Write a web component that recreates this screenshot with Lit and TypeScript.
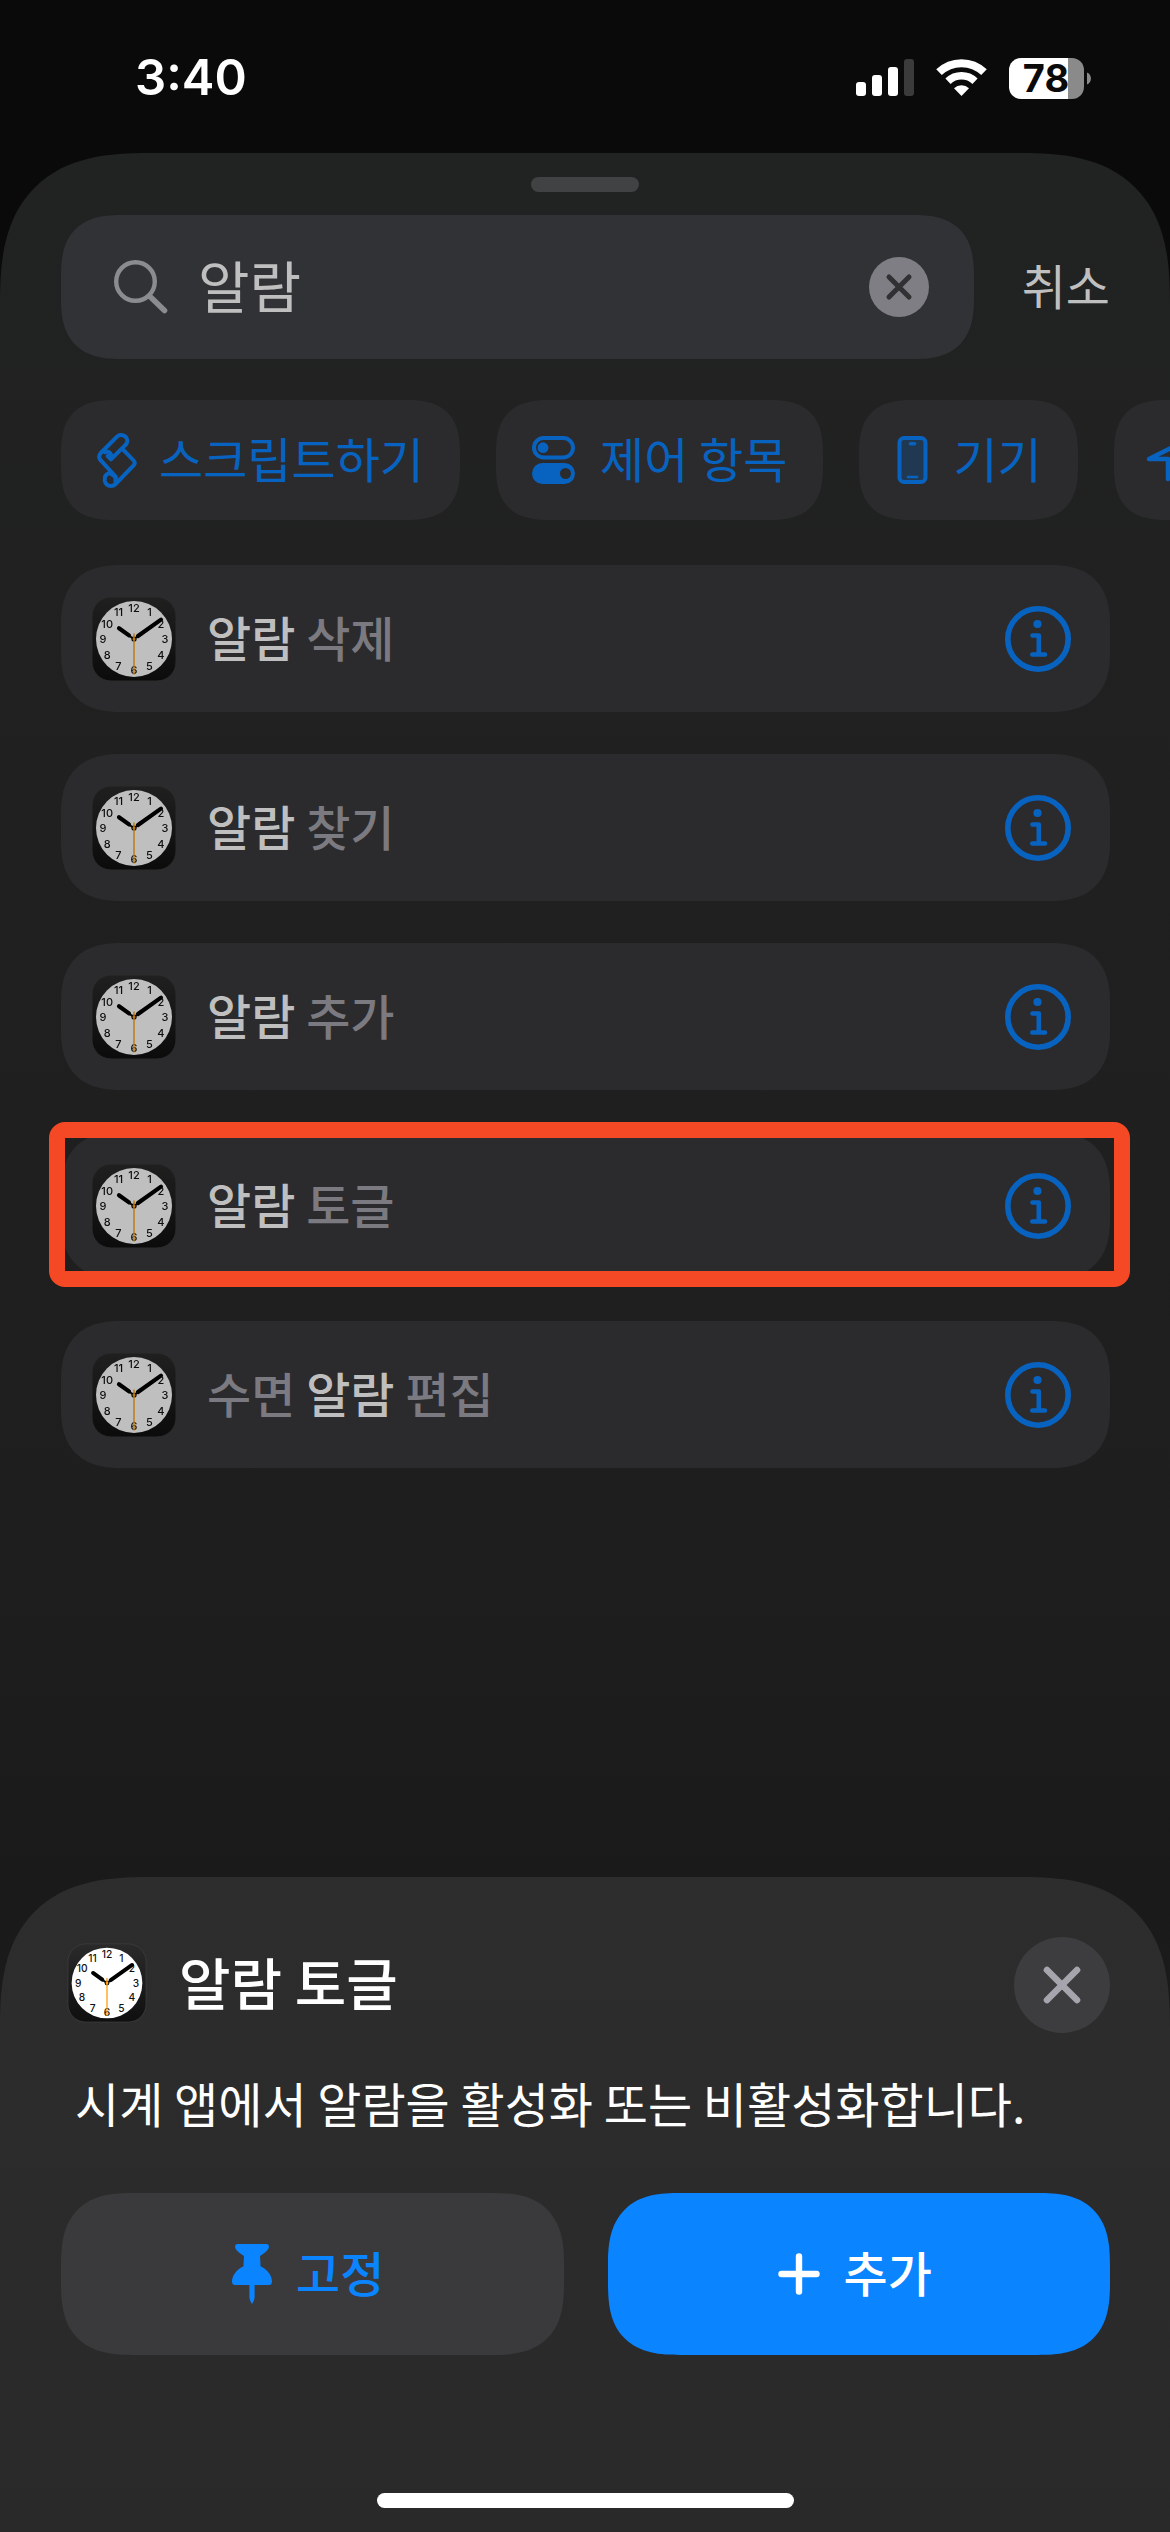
import { LitElement, html, svg, css } from "lit";
import { customElement, property, state } from "lit/decorators.js";

const HOURS = [12, 1, 2, 3, 4, 5, 6, 7, 8, 9, 10, 11];

@customElement("clock-icon")
class ClockIcon extends LitElement {
  static styles = css`
    :host {
      display: block;
      flex: none;
    }
    .clock {
      display: block;
      width: 100%;
      height: 100%;
    }
    .numeral {
      font-family: Inter, "Liberation Sans", sans-serif;
      font-size: 11px;
      font-weight: 500;
      text-anchor: middle;
      fill: #111;
    }
  `;

  render() {
    return html`
      <svg class="clock" viewBox="0 0 86 86" aria-hidden="true">
        <defs>
          <linearGradient id="case" x1="0" y1="0" x2="0" y2="1">
            <stop offset="0" stop-color="#2a2a2b" />
            <stop offset="1" stop-color="#0f0f10" />
          </linearGradient>
        </defs>
        <rect x="1" y="1" width="84" height="84" rx="19" fill="url(#case)" stroke="#3a3a3b" stroke-width="1" />
        <circle cx="43" cy="43" r="38" fill="#fff" />
        ${HOURS.map((hour) => {
          const angle = (hour * Math.PI) / 6;
          const x = 43 + Math.sin(angle) * 31;
          const y = 47 - Math.cos(angle) * 31;
          return svg`<text class="numeral" x=${x.toFixed(1)} y=${y.toFixed(1)}>${hour}</text>`;
        })}
        <g stroke="#000" stroke-linecap="round">
          <path d="M43 43 37 39M43 43 49 38.700" stroke-width="2" />
          <path d="M28 32.200 38 39.400M47 40 70 23.600" stroke-width="4.200" />
        </g>
        <circle cx="43" cy="43" r="2.600" fill="#000" />
        <path d="M43 37.500V78.500" stroke="#ff9f0a" stroke-width="1.400" />
        <circle cx="43" cy="43" r="1.500" fill="#ff9f0a" />
      </svg>
    `;
  }
}

const scriptIcon = svg`
  <svg width="42" height="56" viewBox="0 0 42 56" fill="none" stroke="currentColor" stroke-width="4" stroke-linecap="round" stroke-linejoin="round" aria-hidden="true">
    <path d="M28.700 12.700 14 27.300C15.600 22.500 12.600 18.300 8 20.200M14 27.300 10.600 24" />
    <path d="M3.600 28.200C1.800 26 1.800 23.200 3.800 21L20 4.600C22.500 2.200 26.500 2.600 28.800 5 30.800 7.300 30.800 10.500 28.700 12.700" />
    <path d="M3.600 28.200 19 45M12 41.200C8.600 42.400 7.400 45.600 7.800 48.600 8.400 52 11 54 14 54 15.800 54 17.400 53.200 18.600 52L36.600 33.300C38.200 31.500 38.200 30.200 36.600 28.500L25.400 16.800" />
    <path d="M13 41.500C17.500 43 19.500 46 18.400 49.500" />
  </svg>`;

const togglesIcon = svg`
  <svg width="48" height="48" viewBox="0 0 48 48" aria-hidden="true">
    <rect x="2" y="2" width="39" height="19.500" rx="9.750" fill="none" stroke="currentColor" stroke-width="4" />
    <circle cx="11" cy="11.700" r="5.400" fill="currentColor" />
    <path fill="currentColor" fill-rule="evenodd" d="M10.500 27H32.500A10.500 10.500 0 0 1 32.500 48H10.500A10.500 10.500 0 0 1 10.500 27ZM33.500 32A5.500 5.500 0 1 0 33.500 43 5.500 5.500 0 1 0 33.500 32Z" />
  </svg>`;

const phoneIcon = svg`
  <svg width="38" height="48" viewBox="0 0 38 48" aria-hidden="true">
    <rect x="4.500" y="2" width="26" height="44" rx="4.500" fill="#213852" stroke="currentColor" stroke-width="4" />
    <path d="M15.500 7.700H19.500" stroke="currentColor" stroke-width="3.600" stroke-linecap="round" />
    <path d="M13 41H22" stroke="currentColor" stroke-width="2.600" stroke-linecap="round" />
  </svg>`;

const arrowIcon = svg`
  <svg class="spill" width="48" height="48" viewBox="0 0 48 48" fill="none" stroke="currentColor" stroke-width="4.500" stroke-linejoin="round" aria-hidden="true">
    <path d="M-1 23 40 2.500 18 43V23Z" />
  </svg>`;

interface Action {
  parts: { text: string; match?: boolean }[];
  marked?: boolean;
}

const ACTIONS: Action[] = [
  { parts: [{ text: "알람", match: true }, { text: " 삭제" }] },
  { parts: [{ text: "알람", match: true }, { text: " 찾기" }] },
  { parts: [{ text: "알람", match: true }, { text: " 추가" }] },
  { parts: [{ text: "알람", match: true }, { text: " 토글" }], marked: true },
  { parts: [{ text: "수면 " }, { text: "알람", match: true }, { text: " 편집" }] },
];

@customElement("action-row")
class ActionRow extends LitElement {
  static styles = css`
    :host {
      display: block;
    }
    .row {
      position: relative;
      display: flex;
      align-items: center;
      min-height: 147px;
      box-sizing: border-box;
      padding: 0 39px 0 30px;
      border-radius: 48px;
      background: #2b2b2d;
    }
    @supports (corner-shape: squircle) {
      .row {
        border-radius: 60px;
        corner-shape: superellipse(1.3);
      }
    }
    .icon {
      width: 86px;
      height: 86px;
      filter: brightness(0.75);
    }
    .name {
      flex: 1;
      margin-left: 30px;
      padding-bottom: 6px;
      font-size: 48px;
      line-height: 72px;
      font-weight: 500;
      color: #7b7a80;
      white-space: pre;
    }
    .match {
      color: #bfbfbf;
    }
    .info {
      display: block;
      padding: 0;
      border: 0;
      background: none;
      color: #0863c0;
    }
    .glyph {
      display: block;
    }
    .marker {
      position: absolute;
      inset: -10px -20px -8px -12px;
      border: 16px solid #f54824;
      border-radius: 16px;
      pointer-events: none;
    }
  `;

  @property({ attribute: false }) action!: Action;

  render() {
    const label = this.action.parts.map((p) => p.text).join("");
    return html`
      <div class="row">
        <clock-icon class="icon"></clock-icon>
        <span class="name"
          >${this.action.parts.map((p) =>
            p.match ? html`<span class="match">${p.text}</span>` : p.text
          )}</span
        >
        <button class="info" type="button" aria-label="${label} 정보">
          <svg class="glyph" width="66" height="66" viewBox="0 0 66 66" fill="none" stroke="currentColor" aria-hidden="true">
            <circle cx="33" cy="33" r="30.200" stroke-width="5.600" />
            <circle cx="32.500" cy="18" r="4.100" fill="currentColor" stroke="none" />
            <path d="M27.500 29.500H33.800V48.500M27.300 48.500H40" stroke-width="4.600" stroke-linecap="round" stroke-linejoin="round" />
          </svg>
        </button>
        ${this.action.marked ? html`<span class="marker"></span>` : null}
      </div>
    `;
  }
}

@customElement("app-root")
class AppRoot extends LitElement {
  static styles = css`
    :host {
      display: flex;
      flex-direction: column;
      min-height: 100vh;
      background: #0a0a0a;
      color: #fff;
      font-family: "Noto Sans CJK KR", "Noto Sans", sans-serif;
    }
    button,
    input {
      font: inherit;
      color: inherit;
      margin: 0;
      padding: 0;
      border: 0;
      background: none;
    }
    svg {
      display: block;
      flex: none;
    }
    .status {
      display: flex;
      align-items: center;
      justify-content: space-between;
      height: 153px;
      box-sizing: border-box;
      padding: 3px 79px 0 135px;
      font-family: Inter, "Liberation Sans", sans-serif;
    }
    .time {
      font-size: 49px;
      line-height: 60px;
      font-weight: 600;
    }
    .indicators {
      display: flex;
      align-items: center;
      gap: 22px;
    }
    .battery-level {
      font-family: Inter, "Liberation Sans", sans-serif;
      font-size: 38px;
      font-weight: 700;
      text-anchor: middle;
      fill: #0a0a0a;
    }
    .sheet {
      flex: 1;
      display: flex;
      flex-direction: column;
      border-radius: 112px 112px 0 0;
      background: linear-gradient(#212222 0, #1f1f1f 1000px, #1e1e1e 1400px, #1a1a1a 1720px, #1c1c1c 100%);
    }
    .grabber {
      align-self: center;
      width: 108px;
      height: 15px;
      margin: 24px 0 23px;
      border-radius: 8px;
      background: #414244;
    }
    .searchbar {
      display: flex;
      align-items: center;
      padding: 0 60px 0 61px;
      gap: 48px;
    }
    .field {
      flex: 1;
      min-width: 0;
      display: flex;
      align-items: center;
      height: 144px;
      box-sizing: border-box;
      padding: 0 45px 0 53px;
      border-radius: 48px;
      background: #313235;
      color: #8b8c8f;
    }
    .query {
      flex: 1;
      min-width: 0;
      margin-left: 30px;
      padding-bottom: 6px;
      font-size: 56px;
      line-height: 80px;
      color: #bfbfbf;
      outline: none;
    }
    .clear {
      color: #7e7e84;
    }
    .cancel {
      padding-bottom: 6px;
      font-size: 48px;
      line-height: 72px;
      color: #bfbfbf;
    }
    .chips {
      display: flex;
      gap: 36px;
      margin-top: 41px;
      padding-left: 61px;
      overflow: hidden;
    }
    .chip {
      flex: none;
      display: flex;
      align-items: center;
      gap: 20px;
      height: 120px;
      padding: 0 36px;
      border-radius: 42px;
      background: #2b2b2d;
      color: #0863c0;
      font-size: 48px;
      line-height: 72px;
      white-space: nowrap;
    }
    .label {
      padding-bottom: 6px;
    }
    .spill {
      overflow: visible;
    }
    .list {
      display: flex;
      flex-direction: column;
      gap: 42px;
      margin: 45px 60px 60px 61px;
      padding: 0;
      list-style: none;
    }
    .detail {
      display: flex;
      flex-direction: column;
      margin-top: auto;
      padding: 60px 60px 24px 61px;
      border-radius: 112px 112px 0 0;
      background: linear-gradient(#2d2d2d, #292929);
    }
    .heading {
      display: flex;
      align-items: center;
    }
    .app-icon {
      width: 80px;
      height: 80px;
      margin: 0 0 4px 6px;
    }
    .title {
      flex: 1;
      margin: 0 0 0 32px;
      padding-bottom: 8px;
      font-size: 56px;
      line-height: 80px;
      font-weight: 500;
    }
    .close {
      display: flex;
      align-items: center;
      justify-content: center;
      width: 96px;
      height: 96px;
      border-radius: 50%;
      background: #3d3d3f;
      color: #a6a5ad;
    }
    .description {
      margin: 33px 0 55px;
      padding-left: 14px;
      font-size: 48px;
      line-height: 72px;
    }
    .buttons {
      display: grid;
      grid-template-columns: 1fr 1fr;
      gap: 44px;
    }
    .button {
      display: flex;
      align-items: center;
      justify-content: center;
      gap: 24px;
      height: 162px;
      padding-right: 8px;
      border-radius: 54px;
      background: #3a3a3c;
      color: #0a84ff;
      font-size: 48px;
      line-height: 72px;
      font-weight: 500;
    }
    .primary {
      background: #0a84ff;
      color: #fff;
    }
    .home {
      align-self: center;
      width: 417px;
      height: 15px;
      margin-top: 138px;
      border-radius: 8px;
      background: #fff;
    }
    @supports (corner-shape: squircle) {
      .sheet,
      .detail {
        border-radius: 150px 150px 0 0;
        corner-shape: superellipse(1.4);
      }
      .field {
        border-radius: 62px;
        corner-shape: superellipse(1.4);
      }
      .chip {
        border-radius: 54px;
        corner-shape: superellipse(1.4);
      }
      .button {
        border-radius: 72px;
        corner-shape: superellipse(1.4);
      }
    }
  `;

  @state() private query = "알람";

  private onInput(event: Event) {
    this.query = (event.target as HTMLInputElement).value;
  }

  private clear() {
    this.query = "";
  }

  render() {
    return html`
      <header class="status">
        <span class="time">3:40</span>
        <div class="indicators">
          <svg width="58" height="38" viewBox="0 0 58 38" fill="#fff" aria-hidden="true">
            <rect x="0" y="23" width="10" height="14" rx="3" />
            <rect x="16" y="16" width="10" height="21" rx="3" />
            <rect x="32" y="8" width="10" height="29" rx="3" />
            <rect x="48" y="0" width="10" height="37" rx="3" fill="#3b3b3b" />
          </svg>
          <svg width="51" height="38" viewBox="0 0 51 38" fill="none" stroke="#fff" aria-hidden="true">
            <path d="M3 13.200A32.500 32.500 0 0 1 48 13.200" stroke-width="8" />
            <path d="M12 22.200A19.500 19.500 0 0 1 39 22.200" stroke-width="7.500" />
            <path d="M25.500 37 18 29.300A10.800 10.800 0 0 1 33 29.300Z" fill="#fff" stroke="none" />
          </svg>
          <svg width="82" height="53" viewBox="0 -6 82 53" role="img" aria-label="배터리">
            <path d="M12 0H59V41H12A12 12 0 0 1 0 29V12A12 12 0 0 1 12 0Z" fill="#fff" />
            <path d="M59 0H63A12 12 0 0 1 75 12V29A12 12 0 0 1 63 41H59Z" fill="#8a8a8a" />
            <path d="M78 14.500C83.300 16.500 83.300 24.500 78 26.500Z" fill="#8a8a8a" />
            <text class="battery-level" x="37" y="34">78</text>
          </svg>
        </div>
      </header>

      <main class="sheet">
        <div class="grabber"></div>
        <div class="searchbar">
          <div class="field">
            <svg width="54" height="54" viewBox="0 0 54 54" fill="none" stroke="currentColor" aria-hidden="true">
              <circle cx="21.500" cy="21.500" r="19.300" stroke-width="4.400" />
              <path d="M36 36.500 50.500 50.500" stroke-width="5.600" stroke-linecap="round" />
            </svg>
            <input class="query" type="text" aria-label="검색" .value=${this.query} @input=${this.onInput} />
            <button class="clear" type="button" aria-label="지우기" @click=${this.clear}>
              <svg width="60" height="60" viewBox="0 0 60 60" aria-hidden="true">
                <circle cx="30" cy="30" r="30" fill="currentColor" />
                <path d="M20 20 40 40M40 20 20 40" stroke="#313134" stroke-width="5" stroke-linecap="round" />
              </svg>
            </button>
          </div>
          <button class="cancel" type="button">취소</button>
        </div>

        <nav class="chips">
          <button class="chip" type="button">${scriptIcon}<span class="label">스크립트하기</span></button>
          <button class="chip" type="button">${togglesIcon}<span class="label">제어 항목</span></button>
          <button class="chip" type="button">${phoneIcon}<span class="label">기기</span></button>
          <button class="chip" type="button" aria-label="위치">${arrowIcon}</button>
        </nav>

        <ul class="list">
          ${ACTIONS.map((action) => html`<li><action-row .action=${action}></action-row></li>`)}
        </ul>

        <section class="detail">
          <div class="heading">
            <clock-icon class="app-icon"></clock-icon>
            <h2 class="title">알람 토글</h2>
            <button class="close" type="button" aria-label="닫기">
              <svg width="38" height="38" viewBox="0 0 38 38" stroke="currentColor" stroke-width="6.600" stroke-linecap="round" aria-hidden="true">
                <path d="M4 4 34 34M34 4 4 34" />
              </svg>
            </button>
          </div>
          <p class="description">시계 앱에서 알람을 활성화 또는 비활성화합니다.</p>
          <div class="buttons">
            <button class="button" type="button">
              <svg width="40" height="60" viewBox="0 0 40 60" fill="currentColor" aria-hidden="true">
                <path d="M5.500 0H34.500C37.500 0 37.600 4 35.300 6.300 33 8.700 30.500 10.500 28 12L28.600 22.500C35 25 40 31.500 40 37.500 40 40 38.800 41 36.800 41H3.200C1.200 41 0 40 0 37.500 0 31.500 5 25 11.400 22.500L12 12C9.500 10.500 7 8.700 4.700 6.300 2.400 4 2.500 0 5.500 0Z" />
                <path d="M17.400 40H22.600V53C22.600 55.500 21.500 57.500 20 60 18.500 57.500 17.400 55.500 17.400 53Z" />
              </svg>
              <span class="label">고정</span>
            </button>
            <button class="button primary" type="button">
              <svg width="42" height="42" viewBox="0 0 42 42" stroke="currentColor" stroke-width="6.400" stroke-linecap="round" aria-hidden="true">
                <path d="M21 3.500V38.500M3.500 21H38.500" />
              </svg>
              <span class="label">추가</span>
            </button>
          </div>
          <div class="home"></div>
        </section>
      </main>
    `;
  }
}
